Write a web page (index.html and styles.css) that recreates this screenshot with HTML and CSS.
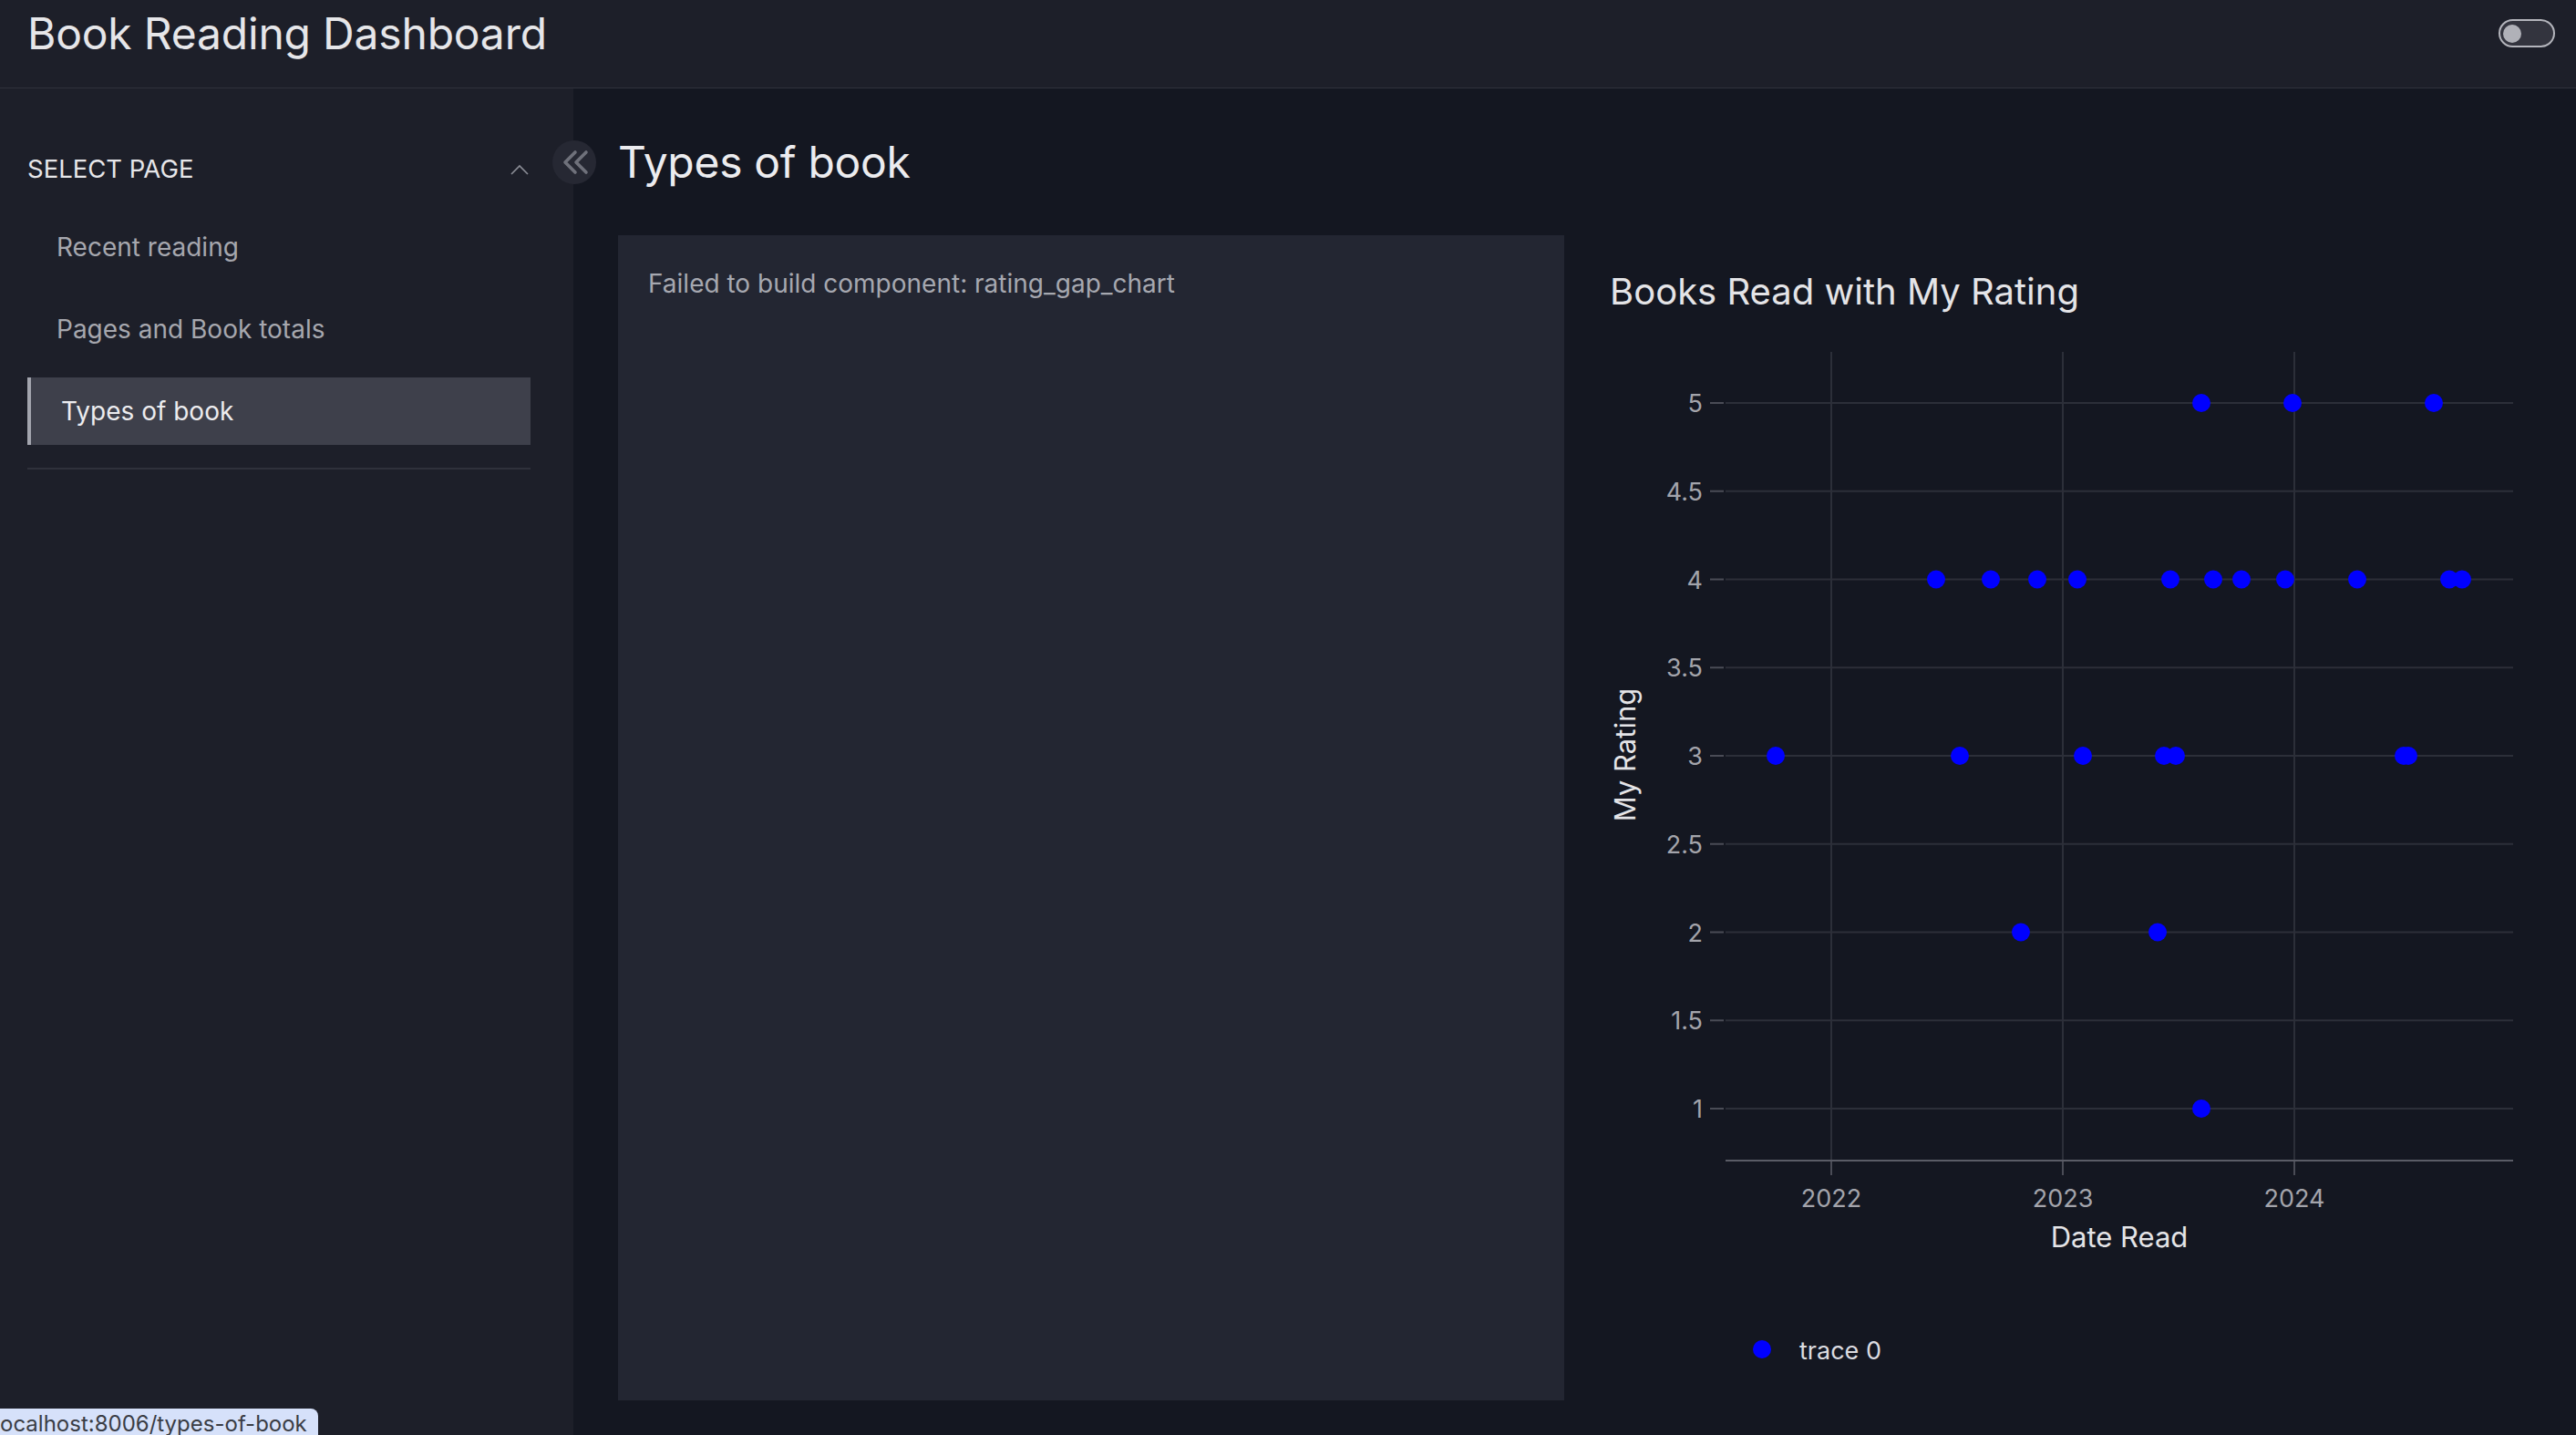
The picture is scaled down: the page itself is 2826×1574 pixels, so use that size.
FILE: index.html
```
<!DOCTYPE html>
<html lang="en">
<head>
<meta charset="utf-8">
<title>Book Reading Dashboard</title>
<link rel="stylesheet" href="styles.css">
</head>
<body>
<div class="app">
  <header class="header">
    <h1 class="app-title">Book Reading Dashboard</h1>
    <div class="toggle"><span class="knob"></span></div>
  </header>
  <div class="body-row">
    <aside class="sidebar">
      <div class="acc-head">
        <span class="acc-label">SELECT PAGE</span>
        <svg class="acc-chev" width="20" height="12" viewBox="0 0 20 12"><polyline points="1,11 10,2 19,11" fill="none" stroke="#8b8d96" stroke-width="1.6"/></svg>
      </div>
      <nav class="nav">
        <a class="nav-item">Recent reading</a>
        <a class="nav-item">Pages and Book totals</a>
        <a class="nav-item active">Types of book</a>
      </nav>
      <div class="divider"></div>
    </aside>
    <main class="main">
      <h2 class="page-title">Types of book</h2>
      <div class="grid">
        <section class="card">
          <p class="fail">Failed to build component: rating_gap_chart</p>
        </section>
        <section class="chart">
          <svg width="1038" height="1278" viewBox="0 0 1038 1278" class="chart-svg">
            <text x="18" y="76" class="c-title">Books Read with My Rating</text>
            <g stroke="#2c2f39" stroke-width="2">
              <line x1="261" y1="128" x2="261" y2="1015"/>
              <line x1="515" y1="128" x2="515" y2="1015"/>
              <line x1="769" y1="128" x2="769" y2="1015"/>
              <line x1="145" y1="184" x2="1009" y2="184"/>
              <line x1="145" y1="280.75" x2="1009" y2="280.75"/>
              <line x1="145" y1="377.5" x2="1009" y2="377.5"/>
              <line x1="145" y1="474.25" x2="1009" y2="474.25"/>
              <line x1="145" y1="571" x2="1009" y2="571"/>
              <line x1="145" y1="667.75" x2="1009" y2="667.75"/>
              <line x1="145" y1="764.5" x2="1009" y2="764.5"/>
              <line x1="145" y1="861.25" x2="1009" y2="861.25"/>
              <line x1="145" y1="958" x2="1009" y2="958"/>
            </g>
            <g stroke="#4a4c56" stroke-width="2">
              <line x1="128" y1="184" x2="143" y2="184"/>
              <line x1="128" y1="280.75" x2="143" y2="280.75"/>
              <line x1="128" y1="377.5" x2="143" y2="377.5"/>
              <line x1="128" y1="474.25" x2="143" y2="474.25"/>
              <line x1="128" y1="571" x2="143" y2="571"/>
              <line x1="128" y1="667.75" x2="143" y2="667.75"/>
              <line x1="128" y1="764.5" x2="143" y2="764.5"/>
              <line x1="128" y1="861.25" x2="143" y2="861.25"/>
              <line x1="128" y1="958" x2="143" y2="958"/>
              <line x1="261" y1="1015" x2="261" y2="1031"/>
              <line x1="515" y1="1015" x2="515" y2="1031"/>
              <line x1="769" y1="1015" x2="769" y2="1031"/>
            </g>
            <line x1="145" y1="1015" x2="1009" y2="1015" stroke="#5a5c66" stroke-width="2"/>
            <g class="c-tick" text-anchor="end">
              <text x="120" y="194">5</text>
              <text x="120" y="290.75">4.5</text>
              <text x="120" y="387.5">4</text>
              <text x="120" y="484.25">3.5</text>
              <text x="120" y="581">3</text>
              <text x="120" y="677.75">2.5</text>
              <text x="120" y="774.5">2</text>
              <text x="120" y="871.25">1.5</text>
              <text x="120" y="968">1</text>
            </g>
            <g class="c-tick" text-anchor="middle">
              <text x="261" y="1066">2022</text>
              <text x="515" y="1066">2023</text>
              <text x="769" y="1066">2024</text>
            </g>
            <text x="577" y="1110" class="c-axis" text-anchor="middle">Date Read</text>
            <text x="0" y="0" class="c-axis" text-anchor="middle" transform="translate(46 570) rotate(-90)">My Rating</text>
            <g fill="#0000ff">
              <circle cx="667" cy="184" r="10"/>
              <circle cx="767" cy="184" r="10"/>
              <circle cx="922" cy="184" r="10"/>
              <circle cx="376" cy="377.5" r="10"/>
              <circle cx="436" cy="377.5" r="10"/>
              <circle cx="487" cy="377.5" r="10"/>
              <circle cx="531" cy="377.5" r="10"/>
              <circle cx="633" cy="377.5" r="10"/>
              <circle cx="680" cy="377.5" r="10"/>
              <circle cx="711" cy="377.5" r="10"/>
              <circle cx="759" cy="377.5" r="10"/>
              <circle cx="838" cy="377.5" r="10"/>
              <circle cx="939" cy="377.5" r="10"/>
              <circle cx="953" cy="377.5" r="10"/>
              <circle cx="200" cy="571" r="10"/>
              <circle cx="402" cy="571" r="10"/>
              <circle cx="537" cy="571" r="10"/>
              <circle cx="626" cy="571" r="10"/>
              <circle cx="639" cy="571" r="10"/>
              <circle cx="889" cy="571" r="10"/>
              <circle cx="894" cy="571" r="10"/>
              <circle cx="469" cy="764.5" r="10"/>
              <circle cx="619" cy="764.5" r="10"/>
              <circle cx="667" cy="958" r="10"/>
              <circle cx="185" cy="1222" r="10"/>
            </g>
            <text x="226" y="1233" class="c-legend">trace 0</text>
          </svg>
        </section>
      </div>
    </main>
  </div>
  <button class="collapse" aria-label="Collapse sidebar">
    <svg width="48" height="48" viewBox="0 0 48 48"><path d="M25 13 L14 24 L25 35 M37 13 L26 24 L37 35" fill="none" stroke="#6f717b" stroke-width="3.6" stroke-linecap="round" stroke-linejoin="round"/></svg>
  </button>
  <div class="status">ocalhost:8006/types-of-book</div>
</div>
</body>
</html>
```
FILE: styles.css
```
* { box-sizing: border-box; }
html, body { margin: 0; padding: 0; }
body {
  width: 2826px;
  height: 1574px;
  overflow: hidden;
  background: #141721;
  font-family: Inter, "Noto Sans", sans-serif;
  color: #e4e4e7;
}
.app {
  position: relative;
  width: 2826px;
  height: 1574px;
  display: flex;
  flex-direction: column;
  background: #141721;
}
.header {
  height: 97px;
  flex: none;
  display: flex;
  justify-content: space-between;
  align-items: flex-start;
  padding: 0 23px 0 30px;
  background: #1d1f29;
  border-bottom: 1px solid #30323c;
}
.app-title {
  margin: 7px 0 0 0;
  font-size: 48px;
  line-height: 60px;
  letter-spacing: -0.2px;
  font-weight: 400;
  color: #e6e6e9;
}
.toggle {
  margin-top: 21px;
  width: 62px;
  height: 31px;
  border: 2.5px solid #b4b5bc;
  border-radius: 16px;
  background: #33343e;
  display: flex;
  align-items: center;
  padding-left: 3px;
}
.knob {
  width: 20px;
  height: 20px;
  border-radius: 50%;
  background: #b0b1b8;
}
.body-row {
  flex: 1;
  display: flex;
  min-height: 0;
}
.sidebar {
  width: 629px;
  flex: none;
  background: #1d1f29;
  padding: 70px 47px 0 30px;
}
.acc-head {
  display: flex;
  justify-content: space-between;
  align-items: center;
  height: 36px;
}
.acc-label {
  font-size: 27.5px;
  line-height: 36px;
  color: #e6e6e9;
}
.acc-chev { margin-right: 2px; margin-top: 2px; }
.nav {
  margin-top: 31px;
  display: flex;
  flex-direction: column;
  gap: 16px;
}
.nav-item {
  height: 74px;
  display: flex;
  align-items: center;
  padding-left: 32px;
  font-size: 28px;
  line-height: 36px;
  color: #a6a7ae;
}
.nav-item.active {
  background: #3e404b;
  border-left: 4px solid #a3a5ae;
  padding-left: 33px;
  color: #ececef;
}
.divider {
  margin-top: 25px;
  height: 2px;
  background: #2f313b;
}
.main {
  flex: 1;
  padding: 51px 40px 0 49px;
  min-width: 0;
  background: #141721;
}
.page-title {
  margin: 0;
  font-size: 48px;
  line-height: 60px;
  letter-spacing: -0.3px;
  font-weight: 400;
  color: #ececef;
}
.grid {
  margin-top: 50px;
  display: grid;
  grid-template-columns: 1038px 1038px;
  column-gap: 32px;
}
.card {
  height: 1278px;
  background: #232632;
  padding: 35px 33px;
}
.fail {
  margin: 0;
  font-size: 28px;
  line-height: 36px;
  color: #a6a8b0;
}
.chart { height: 1278px; }
.chart-svg { display: block; font-family: Inter, "Noto Sans", sans-serif; }
.c-title { font-size: 40px; fill: #e4e4e7; }
.c-tick { font-size: 27px; fill: #a3a4ab; }
.c-axis { font-size: 31px; fill: #e4e4e7; }
.c-legend { font-size: 27px; fill: #dcdce0; }
.collapse {
  position: absolute;
  left: 606px;
  top: 154px;
  width: 48px;
  height: 48px;
  padding: 0;
  border: none;
  border-radius: 50%;
  background: #262833;
  display: flex;
}
.status {
  position: absolute;
  left: 0;
  bottom: 0;
  width: 349px;
  height: 29px;
  background: #d6e1fa;
  border-top-right-radius: 8px;
  font-size: 24px;
  line-height: 34px;
  color: #3a3d45;
  overflow: hidden;
  white-space: nowrap;
}
```
